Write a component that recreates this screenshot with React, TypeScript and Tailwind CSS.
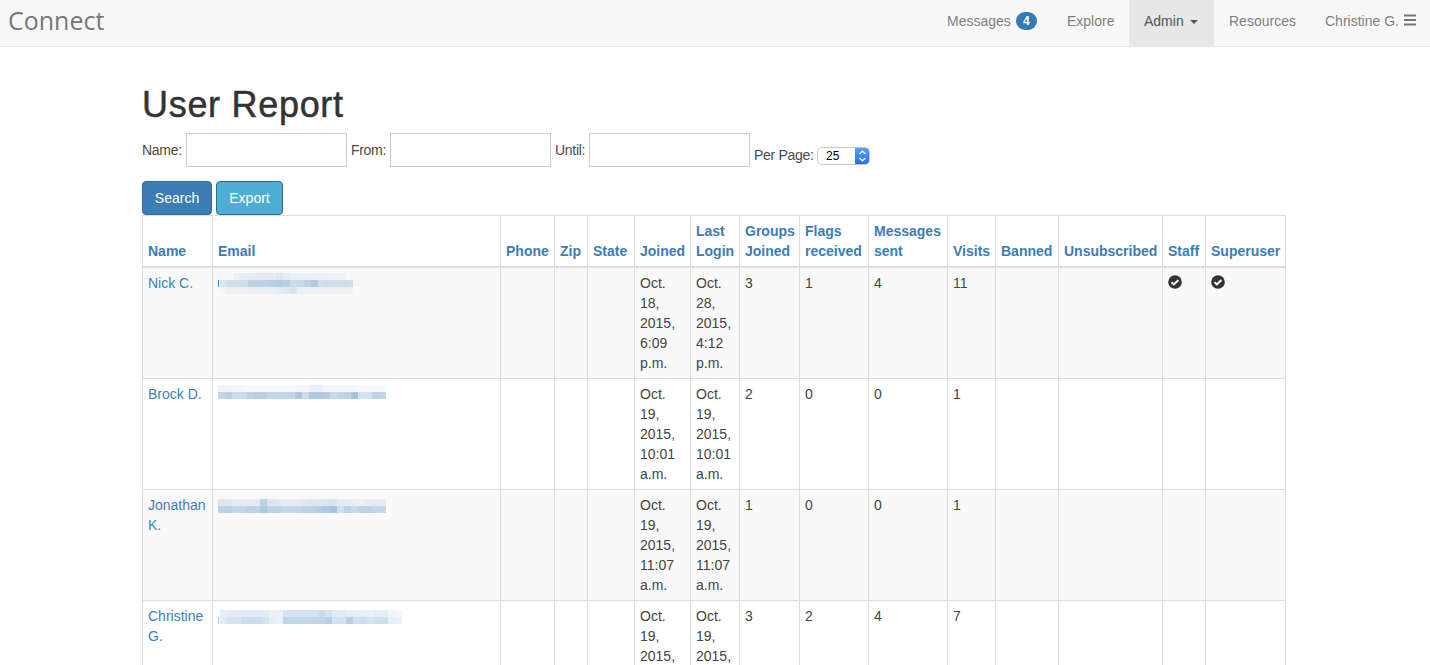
const SANS = "font-['Liberation_Sans',Arial,sans-serif]";

const headers = [
  "Name", "Email", "Phone", "Zip", "State", "Joined", "Last Login", "Groups Joined",
  "Flags received", "Messages sent", "Visits", "Banned", "Unsubscribed", "Staff", "Superuser",
];
const widths = [70, 288, 54, 33, 47, 56, 49, 60, 69, 79, 48, 63, 104, 43, 80];

type Row = {
  name: string;
  blur: number[][];
  top: number;
  dx: number;
  tick: number;
  joined: string;
  login: string;
  g: string;
  f: string;
  m: string;
  v: string;
  admin?: boolean;
};

const rows: Row[] = [
  {
    name: "Nick C.",
    top: 1,
    dx: 2,
    tick: 0.9,
    blur: [
      [0, 0, .07, .09, .09, .1, .1, .1, .14, .1, .08, .08, .08, .08, .07, .06, .06, .05, 0, 0],
      [.16, .22, .22, .2, .3, .3, .3, .32, .36, .32, .22, .24, .3, .36, .2, .22, .22, .22, .2, .02],
      [.03, .05, .05, .05, .08, .08, .08, .08, .1, .12, .16, .08, .05, .05, .05, .05, .05, .05, .04, 0],
    ],
    joined: "Oct. 18, 2015, 6:09 p.m.",
    login: "Oct. 28, 2015, 4:12 p.m.",
    g: "3", f: "1", m: "4", v: "11", admin: true,
  },
  {
    name: "Brock D.",
    top: 2,
    dx: 0,
    tick: 0,
    blur: [
      [.08, .08, .05, .05, .04, .04, .04, .04, .04, .04, .04, .05, .05, .1, .1, .06, .06, .05, .05, .05, .04, .04, .04, .04],
      [.3, .34, .25, .25, .32, .36, .36, .3, .3, .3, .3, .42, .26, .4, .4, .38, .28, .3, .32, .44, .22, .22, .32, .3],
    ],
    joined: "Oct. 19, 2015, 10:01 a.m.",
    login: "Oct. 19, 2015, 10:01 a.m.",
    g: "2", f: "0", m: "0", v: "1",
  },
  {
    name: "Jonathan K.",
    top: 5,
    dx: 0,
    tick: 0,
    blur: [
      [.15, .15, .1, .1, .1, .1, .3, .15, .12, .1, .1, .1, .12, .14, .14, .16, .16, .1, .1, .08, .08, .1, .1, .1],
      [.3, .3, .26, .26, .3, .3, .38, .3, .3, .26, .26, .26, .3, .3, .34, .38, .42, .2, .3, .24, .3, .3, .26, .26],
    ],
    joined: "Oct. 19, 2015, 11:07 a.m.",
    login: "Oct. 19, 2015, 11:07 a.m.",
    g: "1", f: "0", m: "0", v: "1",
  },
  {
    name: "Christine G.",
    top: 5,
    dx: 2,
    tick: 0.45,
    blur: [
      [.12, .14, .14, .14, .14, .14, .14, .1, .1, .2, .2, .2, .2, .2, .26, .2, .14, .14, .12, .12, .1, .1, .12, .12, .08, .06],
      [.14, .2, .2, .26, .26, .26, .2, .12, .1, .3, .3, .3, .3, .3, .3, .36, .22, .22, .36, .24, .24, .2, .24, .24, .12, .1],
    ],
    joined: "Oct. 19, 2015, 11:11 a.m.",
    login: "Oct. 19, 2015, 11:11 a.m.",
    g: "3", f: "2", m: "4", v: "7",
  },
];

function Blur({ row }: { row: Row }) {
  const tickY = row.top + 7;
  return (
    <svg width="200" height="22" className="block mt-[-1px]" aria-hidden="true">
      {row.tick > 0 && <rect x="0" y={tickY} width="1" height="7" fill="#337ab7" opacity={row.tick} />}
      {row.blur.map((line, y) =>
        line.map((o, x) => (
          <rect key={x + "-" + y} x={row.dx + x * 7} y={row.top + y * 7} width="7" height="7" fill="#337ab7" opacity={o} />
        )),
      )}
    </svg>
  );
}

function OkSign() {
  return (
    <svg width="14" height="14" viewBox="0 0 14 14" className="block mt-[2px]" aria-hidden="true">
      <circle cx="7" cy="7" r="6.8" fill="#333333" />
      <path d="M3.6 7.2 L5.9 9.4 L10.4 5" fill="none" stroke="#ffffff" strokeWidth="2" />
    </svg>
  );
}

function Bars() {
  return (
    <svg width="12" height="12" viewBox="0 0 12 12" className="ml-[5px] mb-[2px]" aria-hidden="true">
      <rect x="0" y="0.5" width="12" height="2" fill="#777777" />
      <rect x="0" y="5" width="12" height="2" fill="#777777" />
      <rect x="0" y="9.5" width="12" height="2" fill="#777777" />
    </svg>
  );
}

const navBase = "flex items-center h-[46px] pl-[15px] pb-[5px] ";
const navIdle = navBase + "text-[#7f7f7f] ";

const th = "border border-[#dddddd] border-b-2 p-[5px] text-left align-bottom font-bold text-[#3a7db8] leading-[20px]";
const td = "border border-[#dddddd] p-[5px] align-top leading-[20px]";
const input = "w-[161px] h-[34px] border border-[#cccccc] bg-white";
const label = "text-[14px] tracking-[-0.3px] text-[#4a4a4a] whitespace-nowrap";

export default function App() {
  return (
    <div className={"h-[665px] overflow-hidden bg-white text-[14px] text-[#444444] leading-[20px] " + SANS}>
      <nav className="flex items-center justify-between h-[47px] bg-[#f8f8f8] border-b border-[#e7e7e7]">
        <a className="pl-[8px] text-[25px] text-[#777777] font-['Open_Sans',sans-serif] leading-[42px] pb-[6px]">Connect</a>
        <div className="flex items-center">
          <a className={navIdle + "w-[120px]"}>
            Messages
            <span className="ml-[5px] inline-block min-w-[21px] h-[18px] rounded-[10px] bg-[#337ab7] text-white text-[12px] font-bold text-center leading-[18px]">4</span>
          </a>
          <a className={navIdle + "w-[77px]"}>Explore</a>
          <a className={navBase + "w-[85px] bg-[#e7e7e7] text-[#555555]"}>
            Admin
            <span className="ml-[6px] mt-[2px] w-0 h-0 border-x-[4px] border-x-transparent border-t-[4px] border-t-[#555555]" />
          </a>
          <a className={navIdle + "w-[96px]"}>Resources</a>
          <a className={navIdle + "w-[120px]"}>
            Christine G.
            <Bars />
          </a>
        </div>
      </nav>

      <main className="mx-[142px] w-[1143px]">
        <h1 className="mt-[38px] mb-[8px] text-[36px] leading-[40px] font-normal text-[#333333] [-webkit-text-stroke:0.5px_#333333] tracking-[0.7px]">User Report</h1>

        <form className="flex items-start h-[48px]">
          <label className={label + " mt-[7px] w-[44px]"}>Name:</label>
          <input className={input} />
          <label className={label + " mt-[7px] w-[43px] pl-[4px]"}>From:</label>
          <input className={input} />
          <label className={label + " mt-[7px] w-[38px] pl-[4px]"}>Until:</label>
          <input className={input} />
          <label className={label + " mt-[12px] w-[67px] pl-[4px]"}>Per Page:</label>
          <div className="flex mt-[14px] w-[53px] h-[18px] rounded-[5px] border border-[#c8c8c8] bg-white overflow-hidden">
            <span className="flex-1 pl-[8px] text-[12px] leading-[17px] text-black">25</span>
            <span className="flex items-center justify-center w-[15px] mt-[-1px] mb-[-1px] mr-[-1px] bg-gradient-to-b from-[#5aa2fb] to-[#1a6ef5]">
              <svg width="9" height="14" viewBox="0 0 9 14" fill="none" stroke="#ffffff" strokeWidth="1.4" aria-hidden="true">
                <path d="M1.5 5 L4.5 2.2 L7.5 5" />
                <path d="M1.5 9 L4.5 11.8 L7.5 9" />
              </svg>
            </span>
          </div>
        </form>

        <div className="flex gap-[4px]">
          <button className="w-[70px] h-[34px] rounded-[4px] border border-[#2e6da4] bg-[#3d7cb4] text-white">Search</button>
          <button className="w-[67px] h-[34px] rounded-[4px] border border-[#2b6f8e] bg-[#4fadd3] text-white">Export</button>
        </div>

        <table className="table-fixed border-collapse w-[1143px]">
          <colgroup>
            {widths.map((w, i) => (
              <col key={i} style={{ width: w }} />
            ))}
          </colgroup>
          <thead>
            <tr>
              {headers.map((h) => (
                <th key={h} className={th}>{h}</th>
              ))}
            </tr>
          </thead>
          <tbody>
            {rows.map((r, i) => (
              <tr key={r.name} className={i % 2 === 0 ? "bg-[#f9f9f9]" : "bg-white"}>
                <td className={td + " text-[#4080b9]"}>{r.name}</td>
                <td className={td}><Blur row={r} /></td>
                <td className={td}></td>
                <td className={td}></td>
                <td className={td}></td>
                <td className={td}>{r.joined}</td>
                <td className={td}>{r.login}</td>
                <td className={td}>{r.g}</td>
                <td className={td}>{r.f}</td>
                <td className={td}>{r.m}</td>
                <td className={td}>{r.v}</td>
                <td className={td}></td>
                <td className={td}></td>
                <td className={td}>{r.admin && <OkSign />}</td>
                <td className={td}>{r.admin && <OkSign />}</td>
              </tr>
            ))}
          </tbody>
        </table>
      </main>
    </div>
  );
}
